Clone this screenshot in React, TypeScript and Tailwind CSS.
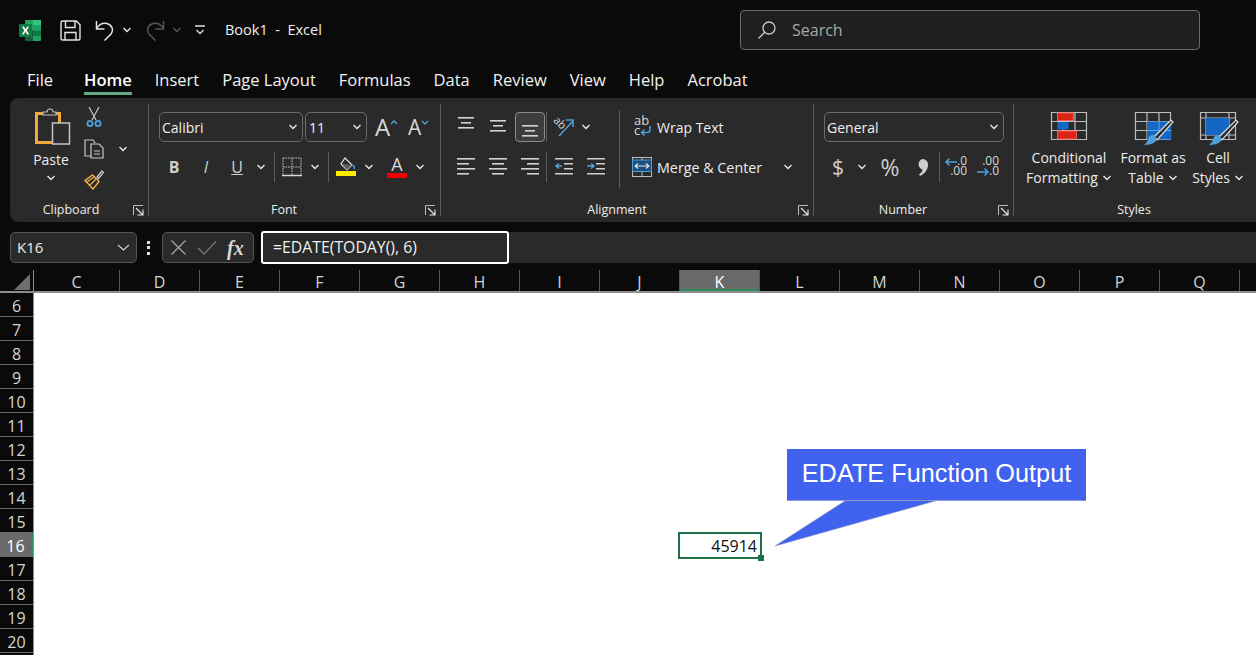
import type { ReactNode } from 'react';

const uiFont = "font-['Open_Sans','Noto_Sans',sans-serif]";
const columns = ['D', 'E', 'F', 'G', 'H', 'I', 'J', 'K', 'L', 'M', 'N', 'O', 'P', 'Q'];
const rows = [6, 7, 8, 9, 10, 11, 12, 13, 14, 15, 16, 17, 18, 19, 20];
const tabs = ['Home', 'Insert', 'Page Layout', 'Formulas', 'Data', 'Review', 'View', 'Help', 'Acrobat'];

function Chevron({ className = '', color = '#e6e6e6' }: { className?: string; color?: string }) {
  return (
    <svg width="10" height="6" viewBox="0 0 10 6" fill="none" className={`shrink-0 ${className}`}>
      <path d="M1.500 1l3.500 3.500L8.500 1" stroke={color} strokeWidth="1.400" />
    </svg>
  );
}

function Launcher() {
  return (
    <svg width="11" height="11" viewBox="0 0 11 11" fill="none" className="shrink-0">
      <path d="M10 .5H.5V10" stroke="#bdbdbd" />
      <path d="M3 3l6.500 6.500M4.500 10h5.500V4.500" stroke="#e8e8e8" strokeWidth="1.100" />
    </svg>
  );
}

function VSep({ className = '' }: { className?: string }) {
  return <div className={`w-px bg-[#5c5c5c] shrink-0 ${className}`} />;
}

function Group({ width, labelWidth, label, launcher, children }: {
  width: string;
  labelWidth: string;
  label: string;
  launcher?: boolean;
  children: ReactNode;
}) {
  return (
    <div className={`${width} shrink-0 flex flex-col h-full`}>
      <div className="flex-1 min-h-0">{children}</div>
      <div className="h-[22px] mb-[1px] flex items-center">
        <div className={`${labelWidth} text-center text-[12.5px] text-[#ececec]`}>{label}</div>
        {launcher && <div className="ml-auto mr-[4px] flex"><Launcher /></div>}
      </div>
    </div>
  );
}

function Dropdown({ width, text, pad = 'pl-[2px]' }: { width: string; text: string; pad?: string }) {
  return (
    <div className={`${width} h-[30px] shrink-0 rounded-[5px] border border-[#6b6b6b] bg-[#2b2b2b] flex items-center justify-between ${pad} pr-[4px]`}>
      <span className="text-[14px] text-[#f0f0f0]">{text}</span>
      <Chevron />
    </div>
  );
}

function Lines({ ys, align = 'left' }: { ys: [number, number][]; align?: 'left' | 'center' | 'right' }) {
  return (
    <svg width="18" height="30" viewBox="0 0 18 30" className="shrink-0">
      {ys.map(([y, w], i) => (
        <rect
          key={i}
          x={align === 'left' ? 0 : align === 'center' ? (18 - w) / 2 : 18 - w}
          y={y}
          width={w}
          height="1.600"
          fill="#d2d2d2"
        />
      ))}
    </svg>
  );
}

function ExcelLogo() {
  return (
    <svg width="22" height="21" viewBox="0 0 22 21" className="shrink-0">
      <path d="M6 1a1 1 0 011-1h14a1 1 0 011 1v19a1 1 0 01-1 1H7a1 1 0 01-1-1z" fill="#21a366" />
      <rect x="14" y="0" width="8" height="5" fill="#33c481" />
      <rect x="14" y="5" width="8" height="5.500" fill="#21a366" />
      <rect x="14" y="10.500" width="8" height="5.500" fill="#107c41" />
      <path d="M6 10.500h8V21H7a1 1 0 01-1-1z" fill="#185c37" />
      <rect x="0" y="4" width="13" height="13" rx="1" fill="#107c41" />
      <path d="M3 6.500l2.300 4-2.500 4h1.900L6.500 11.700l1.800 2.800h1.900l-2.500-4 2.300-4H8.200L6.500 9.300 4.900 6.500z" fill="#fff" />
    </svg>
  );
}

function SaveIcon() {
  return (
    <svg width="21" height="21" viewBox="0 0 21 21" fill="none" stroke="#e4e4e4" strokeWidth="1.400" className="shrink-0">
      <path d="M1 2.500A1.500 1.500 0 012.500 1h13.800L20 4.700v13.800a1.500 1.500 0 01-1.500 1.500h-16A1.500 1.500 0 011 18.500z" />
      <path d="M5.500 1v6.500h9.500V1M5 20v-7.500h11V20" />
    </svg>
  );
}

function UndoIcon({ color, flip }: { color: string; flip?: boolean }) {
  return (
    <svg width="20" height="21" viewBox="0 0 20 21" fill="none" stroke={color} strokeWidth="1.500" className={`shrink-0 ${flip ? '-scale-x-100' : ''}`}>
      <path d="M1.500 1v8h8" />
      <path d="M1.500 8.500C4 4.500 8 2.500 12 3.500c5 1.300 7 6.500 4 10.500l-6.500 6.500" />
    </svg>
  );
}

function PasteIcon() {
  return (
    <svg width="36" height="38" viewBox="0 0 36 38" fill="none" className="shrink-0 ml-[4px]">
      <path d="M1.500 6.500h23v29h-23z" stroke="#f2a83b" strokeWidth="3" />
      <path d="M8 7V5h4c0-4 6-4 6 0h3v3H8z" fill="#2b2b2b" stroke="#bdbdbd" strokeWidth="1.200" />
      <rect x="17.500" y="16" width="17" height="21" fill="#2b2b2b" stroke="#c4c4c4" strokeWidth="1.500" />
    </svg>
  );
}

function CutIcon() {
  return (
    <svg width="20" height="20" viewBox="0 0 20 20" fill="none" className="shrink-0">
      <path d="M5 0l7 13M15 0L8 13" stroke="#c8c8c8" strokeWidth="1.200" />
      <circle cx="6" cy="16.500" r="2.600" stroke="#4ea0dc" strokeWidth="1.800" />
      <circle cx="14" cy="16.500" r="2.600" stroke="#4ea0dc" strokeWidth="1.800" />
    </svg>
  );
}

function CopyIcon() {
  return (
    <svg width="20" height="20" viewBox="0 0 20 20" fill="none" stroke="#c8c8c8" strokeWidth="1.200" className="shrink-0">
      <path d="M7 17H1V1h8l2 3" />
      <path d="M7 5h8l4 4v10H7z" fill="#2b2b2b" />
      <path d="M10 12h6M10 15h6" />
    </svg>
  );
}

function BrushIcon() {
  return (
    <svg width="20" height="20" viewBox="0 0 20 20" fill="none" className="shrink-0">
      <path d="M13 7l5-6 1.500 1.500-5 6z" fill="#2b2b2b" stroke="#d0d0d0" strokeWidth="1.200" />
      <path d="M8.500 5L1 10.500 9 19l6-7.500z" fill="#2b2b2b" stroke="#f0b04a" strokeWidth="1.400" />
      <path d="M3 12l7-5M6 15l6-6" stroke="#f0b04a" strokeWidth="1.200" />
    </svg>
  );
}

function GrowFont({ up }: { up?: boolean }) {
  return (
    <div className="w-[20px] h-[30px] shrink-0 flex items-center">
      <span className={`${up ? 'text-[24px]' : 'text-[21px]'} leading-none text-[#d8d8d8]`}>A</span>
      <svg width="8" height="5" viewBox="0 0 8 5" fill="none" className="mb-[10px] shrink-0">
        <path d={up ? 'M1 4l3-3 3 3' : 'M1 1l3 3 3-3'} stroke="#4ea0dc" strokeWidth="1.400" />
      </svg>
    </div>
  );
}

function BordersIcon() {
  return (
    <svg width="20" height="20" viewBox="0 0 20 20" fill="none" className="shrink-0">
      <path d="M1 1h18M1 1v18M19 1v18M1 10h18M10 1v18" stroke="#c8c8c8" strokeDasharray="1.500 1" />
      <path d="M0 18.500h20" stroke="#d8d8d8" strokeWidth="1.500" />
    </svg>
  );
}

function FillIcon() {
  return (
    <svg width="20" height="20" viewBox="0 0 20 20" fill="none" className="shrink-0">
      <path d="M9 1l7 7-5 5-6-6z" stroke="#e0e0e0" strokeWidth="1.200" />
      <path d="M6 7l10 1-5 5z" fill="#5f5f5f" />
      <path d="M17 8c1.500 2 2 3 1 4" stroke="#4ea0dc" strokeWidth="1.500" />
      <rect x="0" y="14" width="20" height="5" fill="#ffeb00" />
    </svg>
  );
}

function FontColorIcon() {
  return (
    <div className="w-[20px] h-[22px] shrink-0 flex flex-col items-center">
      <span className="text-[18px] leading-[16px] text-[#d8d8d8]">A</span>
      <div className="w-[20px] h-[5px] bg-[#f00000] mt-[1px]" />
    </div>
  );
}

function OrientIcon() {
  return (
    <svg width="22" height="24" viewBox="0 0 22 24" fill="none" className="shrink-0 overflow-visible">
      <text x="0" y="11" fontSize="11" fill="#d8d8d8" transform="rotate(45 6 8)" fontFamily="Open Sans">ab</text>
      <path d="M6 21L20 6M13 5h7v7" stroke="#4ea0dc" strokeWidth="1.500" />
    </svg>
  );
}

function IndentIcon({ increase }: { increase?: boolean }) {
  return (
    <svg width="18" height="20" viewBox="0 0 18 20" className="shrink-0">
      <rect x="0" y="1" width="18" height="1.500" fill="#cfcfcf" />
      <rect x="9" y="6" width="9" height="1.500" fill="#cfcfcf" />
      <rect x="9" y="11" width="9" height="1.500" fill="#cfcfcf" />
      <rect x="0" y="16" width="18" height="1.500" fill="#cfcfcf" />
      <path d={increase ? 'M0 9h6M4 6.500L7 9l-3 2.500' : 'M7 9H1M4 6.500L1 9l3 2.500'} stroke="#4ea0dc" strokeWidth="1.500" fill="none" />
    </svg>
  );
}

function WrapIcon() {
  return (
    <svg width="18" height="22" viewBox="0 0 18 22" fill="none" className="shrink-0 ml-[2px] overflow-visible">
      <text x="0" y="9" fontSize="13" fill="#d8d8d8" fontFamily="Open Sans">ab</text>
      <text x="0" y="19" fontSize="13" fill="#d8d8d8" fontFamily="Open Sans">c</text>
      <path d="M16 10v3.500a3 3 0 01-3 3H8M10.500 13.500L7.500 16.500 10.500 19.500" stroke="#4ea0dc" strokeWidth="1.500" />
    </svg>
  );
}

function MergeIcon() {
  return (
    <svg width="20" height="20" viewBox="0 0 20 20" fill="none" className="shrink-0">
      <rect x=".5" y=".5" width="19" height="19" stroke="#bdbdbd" />
      <rect x=".5" y="3" width="19" height="11.500" fill="#1c4f7c" stroke="#4ea0dc" />
      <path d="M3 9h14M6 6.500L3 9l3 2.500M14 6.500L17 9l-3 2.500" stroke="#e8e8e8" strokeWidth="1.100" />
      <path d="M10 14.500V20M10 0v3" stroke="#bdbdbd" />
    </svg>
  );
}

function DecimalIcon({ increase }: { increase?: boolean }) {
  return (
    <svg width="28" height="26" viewBox="0 0 28 26" fill="none" className="shrink-0 overflow-visible">
      <text x="25" y="11" fontSize="12" fill="#d8d8d8" textAnchor="end" fontFamily="Open Sans">{increase ? '.00' : '.0'}</text>
      <text x="25" y="21" fontSize="12" fill="#d8d8d8" textAnchor="end" fontFamily="Open Sans">{increase ? '.0' : '.00'}</text>
      <path
        d={increase ? 'M3 18h11M10.500 14.500L14 18l-3.500 3.500' : 'M15 8H4M7.500 4.500L4 8l3.500 3.500'}
        stroke="#4ea0dc"
        strokeWidth="1.500"
      />
    </svg>
  );
}

function TableGrid({ children }: { children: ReactNode }) {
  return (
    <svg width="36" height="28" viewBox="0 0 36 28" fill="none" className="shrink-0 overflow-visible">
      {children}
    </svg>
  );
}

const gridLines = 'M.5 .5h35v27H.5zM.5 9.500h35M.5 18.500h35M12 .5v27M24 .5v27';

function Brush() {
  return (
    <>
      <path d="M19 25L36 8l2 2-16 18z" fill="#2b2b2b" stroke="#e0e0e0" strokeWidth="1.200" />
      <path d="M9 33c4 0 9-1 11-3 2-2 1-4 0-6-2-2-5-1-6 1-1 3-2 6-5 8z" fill="#4ea0dc" />
    </>
  );
}

function StyleButton({ width, icon, line1, line2, margin = '' }: {
  width: string;
  icon: ReactNode;
  line1: string;
  line2: string;
  margin?: string;
}) {
  return (
    <div className={`${width} ${margin} shrink-0 flex flex-col items-center pt-[14px]`}>
      {icon}
      <div className="mt-[8px] text-[14px] leading-[20px] text-[#ececec] whitespace-nowrap">{line1}</div>
      <div className="text-[14px] leading-[20px] text-[#ececec] whitespace-nowrap flex items-center gap-[4px]">
        {line2}
        <Chevron />
      </div>
    </div>
  );
}

function Ribbon() {
  return (
    <div className="ml-[10px] h-[124px] shrink-0 rounded-l-[8px] bg-[#2a2a2a] flex text-[#ececec]">
      <Group width="w-[138px]" labelWidth="w-[122px]" label="Clipboard" launcher>
        <div className="flex items-start pt-[9px]">
          <div className="ml-[14px] w-[54px] flex flex-col items-center">
            <PasteIcon />
            <div className="text-[14px] leading-[18px] mt-[6px]">Paste</div>
            <Chevron className="mt-[6px]" />
          </div>
          <div className="ml-[6px] w-[20px] h-[83px] flex flex-col justify-between">
            <CutIcon />
            <CopyIcon />
            <BrushIcon />
          </div>
          <Chevron className="ml-[14px] mt-[39px]" />
        </div>
      </Group>
      <VSep className="my-[6px]" />

      <Group width="w-[291px]" labelWidth="w-[270px]" label="Font" launcher>
        <div className="pt-[14px] flex flex-col gap-[10px]">
          <div className="flex items-center pl-[10px]">
            <Dropdown width="w-[144px]" text="Calibri" />
            <Dropdown width="w-[62px] ml-[2px]" text="11" pad="pl-[3px]" />
            <div className="ml-[8px]"><GrowFont up /></div>
            <div className="ml-[13px]"><GrowFont /></div>
          </div>
          <div className="flex items-center h-[30px]">
            <div className="ml-[15px] w-[20px] text-center text-[16px] font-bold text-[#cfcfcf]">B</div>
            <div className="ml-[12px] w-[20px] text-center text-[16px] italic text-[#cfcfcf]">I</div>
            <div className="ml-[11px] w-[20px] text-center text-[16px] underline text-[#cfcfcf]">U</div>
            <Chevron className="ml-[9px]" />
            <VSep className="ml-[8px] h-[30px]" />
            <div className="ml-[7px]"><BordersIcon /></div>
            <Chevron className="ml-[8px]" />
            <VSep className="ml-[8px] h-[30px]" />
            <div className="ml-[7px]"><FillIcon /></div>
            <Chevron className="ml-[8px]" />
            <div className="ml-[13px]"><FontColorIcon /></div>
            <Chevron className="ml-[8px]" />
          </div>
        </div>
      </Group>
      <VSep className="my-[6px]" />

      <Group width="w-[372px]" labelWidth="w-[352px]" label="Alignment" launcher>
        <div className="flex pt-[12px]">
          <div className="w-[178px] pl-[9px] pt-[2px] flex flex-col gap-[10px]">
            <div className="flex items-center h-[30px]">
              <div className="w-[32px] flex justify-center"><Lines ys={[[5, 16], [10, 10], [15, 16]]} align="center" /></div>
              <div className="w-[32px] flex justify-center"><Lines ys={[[8, 16], [13, 10], [18, 16]]} align="center" /></div>
              <div className="ml-px w-[30px] h-[30px] rounded-[4px] border border-[#8a8a8a] bg-[#3d3d3d] flex justify-center"><Lines ys={[[12, 16], [17, 10], [22, 16]]} align="center" /></div>
              <VSep className="ml-px h-[30px]" />
              <div className="ml-[6px]"><OrientIcon /></div>
              <Chevron className="ml-[6px]" />
            </div>
            <div className="flex items-center h-[30px]">
              <div className="w-[32px] flex justify-center"><Lines ys={[[6, 18], [11, 12], [16, 18], [21, 12]]} /></div>
              <div className="w-[32px] flex justify-center"><Lines ys={[[6, 18], [11, 12], [16, 18], [21, 12]]} align="center" /></div>
              <div className="ml-px w-[30px] flex justify-center"><Lines ys={[[6, 18], [11, 12], [16, 18], [21, 12]]} align="right" /></div>
              <VSep className="ml-px h-[30px]" />
              <div className="w-[32px] flex justify-center ml-px"><IndentIcon /></div>
              <div className="w-[32px] flex justify-center"><IndentIcon increase /></div>
            </div>
          </div>
          <VSep className="h-[78px]" />
          <div className="pl-[12px] pt-[2px] flex flex-col gap-[10px]">
            <div className="flex items-center h-[30px] gap-[5px] text-[14px]">
              <WrapIcon />
              <span>Wrap Text</span>
            </div>
            <div className="flex items-center h-[30px] gap-[5px] text-[14px]">
              <MergeIcon />
              <span className="w-[121px] text-[14.3px] pt-px">Merge &amp; Center</span>
              <Chevron />
            </div>
          </div>
        </div>
      </Group>
      <VSep className="my-[6px]" />

      <Group width="w-[199px]" labelWidth="w-[178px]" label="Number" launcher>
        <div className="pt-[14px] flex flex-col gap-[10px]">
          <div className="pl-[10px]"><Dropdown width="w-[180px]" text="General" /></div>
          <div className="flex items-center h-[30px] text-[#cfcfcf]">
            <div className="ml-[14px] w-[20px] text-center text-[21px] leading-none">$</div>
            <Chevron className="ml-[9px]" />
            <div className="ml-[9px] w-[28px] text-center text-[23px] leading-none">%</div>
            <div className="ml-[8px] w-[20px] flex justify-center">
              <svg width="11" height="17" viewBox="0 0 11 17" fill="#cfcfcf">
                <path d="M5.500 0a5.500 5.500 0 015.500 6c0 5-4 9-8 11l-1-1.500c2-1.500 3.500-3 3.500-5A5.500 5.500 0 015.500 0z" />
              </svg>
            </div>
            <VSep className="ml-[7px] h-[30px]" />
            <div className="ml-[2px]"><DecimalIcon /></div>
            <div className="ml-[4px]"><DecimalIcon increase /></div>
          </div>
        </div>
      </Group>
      <VSep className="my-[6px]" />

      <Group width="w-[242px]" labelWidth="w-[240px]" label="Styles">
        <div className="flex pl-[10px]">
          <StyleButton
            width="w-[90px]"
            line1="Conditional"
            line2="Formatting"
            icon={
              <TableGrid>
                <path d={gridLines} stroke="#bdbdbd" strokeWidth="1.200" />
                <rect x="6.500" y="1" width="16" height="7.500" fill="#dc2414" stroke="#f06060" />
                <rect x="6.500" y="10" width="11" height="7.500" fill="#1468c4" />
                <rect x="6.500" y="19" width="19" height="8" fill="#dc2414" stroke="#f06060" />
              </TableGrid>
            }
          />
          <StyleButton
            width="w-[70px]"
            margin="ml-[4px]"
            line1="Format as"
            line2="Table"
            icon={
              <TableGrid>
                <path d={gridLines} stroke="#bdbdbd" strokeWidth="1.200" />
                <rect x="12" y="9.500" width="24" height="18" fill="#1468c4" />
                <path d="M12 18.500h24M24 9.500v18" stroke="#5ea4e4" />
                <Brush />
              </TableGrid>
            }
          />
          <StyleButton
            width="w-[56px]"
            margin="ml-[2px]"
            line1="Cell"
            line2="Styles"
            icon={
              <TableGrid>
                <path d="M.5 .5h35v27H.5zM.5 6h35M.5 23h35M6 .5v27M29 .5v27" stroke="#bdbdbd" strokeWidth="1.200" />
                <rect x="6" y="6" width="23" height="17" fill="#1468c4" />
                <Brush />
              </TableGrid>
            }
          />
        </div>
      </Group>
    </div>
  );
}

function FormulaBar() {
  return (
    <div className="mt-[9px] h-[33px] shrink-0 flex items-center">
      <div className="ml-[10px] w-[127px] h-[31px] rounded-[5px] border border-[#555] bg-[#2a2a2a] flex items-center justify-between pl-[6px] pr-[6px] text-[15px] text-[#ececec]">
        K16
        <svg width="13" height="7" viewBox="0 0 13 7" fill="none"><path d="M1 1l5.500 5L12 1" stroke="#d0d0d0" strokeWidth="1.200" /></svg>
      </div>
      <div className="ml-[10px] w-[3px] flex flex-col gap-[2.500px]">
        <div className="h-[3px] bg-[#e0e0e0]" />
        <div className="h-[3px] bg-[#e0e0e0]" />
        <div className="h-[3px] bg-[#e0e0e0]" />
      </div>
      <div className="ml-[12px] w-[92px] h-[31px] rounded-[5px] border border-[#555] bg-[#2a2a2a] flex items-center pl-[7px]">
        <svg width="17" height="17" viewBox="0 0 17 17" fill="none"><path d="M1.500 1.500l14 14M15.500 1.500l-14 14" stroke="#a8a8a8" strokeWidth="1.200" /></svg>
        <svg width="20" height="16" viewBox="0 0 20 16" fill="none" className="ml-[10px]"><path d="M1 8l6 6L19 1.500" stroke="#7d7d7d" strokeWidth="1.200" /></svg>
        <span className="ml-[10px] text-[20px] leading-none italic font-bold font-['Liberation_Serif',serif] text-[#d8d8d8]">fx</span>
      </div>
      <div className="ml-[7px] h-[33px] w-[248px] rounded-[3px] border-[2.500px] border-white bg-[#2a2a2a] flex items-center pl-[10px] text-[15.8px] text-[#f0f0f0]">
        =EDATE(TODAY(), 6)
      </div>
      <div className="flex-1 h-[31px] bg-[#2a2a2a]" />
    </div>
  );
}

function Sheet() {
  return (
    <div className="flex-1 min-h-0 flex flex-col mt-[6px]">
      <div className="h-[23px] flex shrink-0 border-b-2 border-[#8d8d8d]">
        <div className="w-[34px] flex items-end justify-end pr-[3px] pb-px border-r border-[#8d8d8d] shrink-0">
          <div className="w-0 h-0 border-l-[16px] border-l-transparent border-b-[16px] border-b-[#6f6f6f]" />
        </div>
        <div className="w-[86px] shrink-0 text-center text-[16px] leading-[25px] text-[#d4d4d4] border-r border-[#555]">C</div>
        {columns.map((c) => (
          <div
            key={c}
            className={`w-[80px] shrink-0 text-center text-[16px] leading-[25px] border-r border-[#555] ${
              c === 'K' ? 'bg-[#6a6a6a] text-white border-b-2 border-b-[#2e8b57]' : 'text-[#d4d4d4]'
            }`}
          >
            {c}
          </div>
        ))}
      </div>
      <div className="flex-1 min-h-0 flex overflow-hidden">
        <div className="w-[34px] shrink-0 border-r border-[#8d8d8d]">
          {rows.map((r) => (
            <div
              key={r}
              className={`h-[24px] text-center text-[16px] leading-[26px] border-b border-[#666] ${
                r === 16 ? 'bg-[#6a6a6a] text-white border-r-2 border-r-[#2e8b57]' : 'text-[#d4d4d4]'
              }`}
            >
              {r}
            </div>
          ))}
        </div>
        <div className="flex-1 bg-white relative">
          {/* selected cell K16 */}
          <div className="absolute left-[644px] top-[239px] w-[84px] h-[27px] border-[2px] border-[#1f6f48] flex items-center justify-end pr-[3px] text-[16px] text-[#111]">
            45914
            <div className="absolute right-[-4px] bottom-[-4px] w-[6px] h-[6px] bg-[#1f6f48]" />
          </div>
          {/* callout */}
          <svg width="180" height="50" viewBox="0 0 180 50" className="absolute left-[740px] top-[206px]">
            <path d="M74 0L1 47 168 0z" fill="#4062ee" stroke="#7f8fc8" strokeWidth=".6" />
          </svg>
          <div className="absolute left-[753px] top-[156px] w-[299px] h-[52px] bg-[#4062ee] border-b border-[#8a98cc] flex items-center justify-center pb-px font-['Liberation_Sans',sans-serif] text-[25.3px] text-white">
            EDATE Function Output
          </div>
        </div>
      </div>
    </div>
  );
}

export default function App() {
  return (
    <div className={`w-[1256px] h-[655px] overflow-hidden bg-[#0a0a0a] flex flex-col ${uiFont}`}>
      <div className="h-[60px] shrink-0 flex items-center">
        <div className="ml-[19px]"><ExcelLogo /></div>
        <div className="ml-[19px]"><SaveIcon /></div>
        <div className="ml-[14px]"><UndoIcon color="#e4e4e4" /></div>
        <Chevron className="ml-[7px]" />
        <div className="ml-[13px]"><UndoIcon color="#565656" flip /></div>
        <Chevron className="ml-[7px]" color="#565656" />
        <svg width="10" height="10" viewBox="0 0 10 10" fill="none" className="ml-[13px]">
          <path d="M0 1h10M1.500 5l3.500 3.500L8.500 5" stroke="#e0e0e0" strokeWidth="1.300" />
        </svg>
        <div className="ml-[20px] w-[515px] text-[14.5px] text-[#f0f0f0] whitespace-pre">Book1  -  Excel</div>
        <div className="w-[460px] h-[40px] rounded-[4px] border border-[#6a6a6a] bg-[#1f1f1f] flex items-center pl-[16px]">
          <svg width="20" height="20" viewBox="0 0 20 20" fill="none">
            <circle cx="12" cy="8" r="6" stroke="#c8c8c8" strokeWidth="1.300" />
            <path d="M7.500 12.500L1.500 18.500" stroke="#c8c8c8" strokeWidth="1.300" />
          </svg>
          <span className="ml-[15px] text-[16px] text-[#a8a8a8]">Search</span>
        </div>
      </div>

      <div className="h-[38px] shrink-0 flex text-[16.5px] text-[#f2f2f2]">
        <div className="ml-[27px] w-[57px] leading-[40px]">File</div>
        {tabs.map((t) => (
          <div key={t} className="mr-[23px] h-[35px] relative">
            <span className={`leading-[40px] ${t === 'Home' ? 'font-semibold text-white' : ''}`}>{t}</span>
            {t === 'Home' && <div className="absolute left-0 right-0 bottom-0 h-[3px] bg-[#5fa97e]" />}
          </div>
        ))}
      </div>

      <Ribbon />
      <FormulaBar />
      <Sheet />
    </div>
  );
}
